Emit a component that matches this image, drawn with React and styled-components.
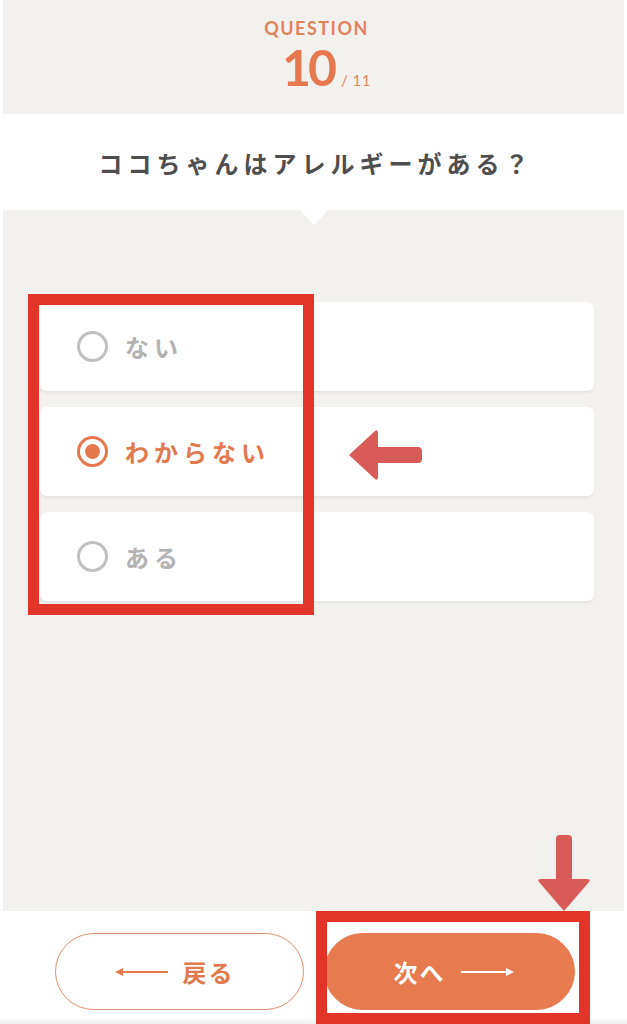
import React, { useState } from 'react';
import styled, { createGlobalStyle } from 'styled-components';

const GlobalStyle = createGlobalStyle`
  html, body {
    margin: 0;
    padding: 0;
    background: #ffffff;
  }
  * {
    box-sizing: border-box;
  }
`;

const ORANGE = '#e6784f';
const ANNOTATE = '#e3342a';
const ARROW = '#d95b57';
const GRAY_BG = '#f3f1ee';

const options = ['ない', 'わからない', 'ある'];

const App = () => {
  const [selected, setSelected] = useState(1);

  return (
    <Page>
      <GlobalStyle />
      <Sheet>
        <Header>
          <Label>QUESTION</Label>
          <Counter>
            <Current>10</Current>
            <Total>/ 11</Total>
          </Counter>
        </Header>

        <QuestionBand>
          <QuestionText>ココちゃんはアレルギーがある？</QuestionText>
        </QuestionBand>

        <Answers>
          {options.map((label, i) => (
            <Card key={label} onClick={() => setSelected(i)}>
              <Radio $checked={selected === i} />
              <OptionText $checked={selected === i}>{label}</OptionText>
            </Card>
          ))}
        </Answers>
      </Sheet>

      <Footer>
        <Button $variant="back">
          <LongArrow $dir="left" />
          戻る
        </Button>
        <Button $variant="next">
          次へ
          <LongArrow $dir="right" />
        </Button>
      </Footer>

      {/* annotations drawn over the screen */}
      <Highlight $left={28} $top={294} $width={286} $height={321} />
      <Highlight $left={316} $top={911} $width={274} $height={113} />
      <PointerLeft viewBox="0 0 78 54">
        <path
          d="M4 27 L30 3 Q33 1 33 5 L33 19 L73 19 Q77 19 77 23 L77 31 Q77 35 73 35 L33 35 L33 49 Q33 53 30 51 Z"
          fill={ARROW}
        />
      </PointerLeft>
      <PointerDown viewBox="0 0 54 78">
        <path
          d="M27 76 L2 47 Q0 44 4 44 L19 44 L19 4 Q19 0 23 0 L31 0 Q35 0 35 4 L35 44 L50 44 Q54 44 52 47 Z"
          fill={ARROW}
        />
      </PointerDown>
    </Page>
  );
};

const LongArrow = ({ $dir }) => (
  <ArrowSvg viewBox="0 0 54 10" $dir={$dir}>
    <line x1="4" y1="5" x2="53" y2="5" stroke="currentColor" strokeWidth="1.8" />
    <path d="M0 5 L8 1 L8 9 Z" fill="currentColor" />
  </ArrowSvg>
);

const Page = styled.div`
  position: relative;
  width: 627px;
  height: 1024px;
  overflow: hidden;
  background: #ffffff;
  font-family: 'Noto Sans CJK JP', 'Noto Sans', sans-serif;
`;

const Sheet = styled.div`
  margin: 0 3px;
  display: flex;
  flex-direction: column;
`;

const Header = styled.header`
  height: 114px;
  background: ${GRAY_BG};
  display: flex;
  flex-direction: column;
  align-items: center;
  padding-top: 16px;
`;

const Label = styled.div`
  font-family: Lato, 'Open Sans', sans-serif;
  font-weight: 700;
  font-size: 18px;
  letter-spacing: 1.5px;
  line-height: 24px;
  color: #e2825c;
  padding-left: 6px;
`;

const Counter = styled.div`
  display: flex;
  align-items: baseline;
  gap: 7px;
  margin-top: 1px;
  padding-left: 26px;
`;

const Current = styled.span`
  font-family: Lato, 'Open Sans', sans-serif;
  font-weight: 700;
  font-size: 50px;
  line-height: 52px;
  letter-spacing: -3px;
  color: ${ORANGE};
`;

const Total = styled.span`
  font-family: Lato, 'Open Sans', sans-serif;
  font-weight: 400;
  font-size: 15px;
  letter-spacing: 0.5px;
  color: #e2875f;
`;

const QuestionBand = styled.section`
  height: 96px;
  background: #ffffff;
  display: flex;
  align-items: center;
  justify-content: center;
`;

const QuestionText = styled.h1`
  margin: 0;
  font-size: 24px;
  font-weight: 700;
  letter-spacing: 5px;
  color: #4e4e4e;
  padding-left: 5px;
`;

const Answers = styled.section`
  position: relative;
  height: 701px;
  background: ${GRAY_BG};
  padding: 92px 30px 0 37px;
  display: flex;
  flex-direction: column;
  gap: 16px;

  &::before {
    content: '';
    position: absolute;
    top: 0;
    left: 50%;
    transform: translateX(-50%);
    border-left: 14px solid transparent;
    border-right: 14px solid transparent;
    border-top: 15px solid #ffffff;
  }
`;

const Card = styled.div`
  height: 89px;
  background: #ffffff;
  border-radius: 7px;
  box-shadow: 0 2px 3px rgba(0, 0, 0, 0.06);
  display: flex;
  align-items: center;
  padding-left: 37px;
  gap: 17px;
  cursor: pointer;
`;

const Radio = styled.span`
  position: relative;
  width: 31px;
  height: 31px;
  border-radius: 50%;
  border: 3px solid ${({ $checked }) => ($checked ? ORANGE : '#c0c0c0')};
  flex-shrink: 0;

  &::after {
    content: '';
    display: ${({ $checked }) => ($checked ? 'block' : 'none')};
    position: absolute;
    inset: 5px;
    border-radius: 50%;
    background: ${ORANGE};
  }
`;

const OptionText = styled.span`
  font-size: 24px;
  font-weight: 700;
  letter-spacing: 5px;
  color: ${({ $checked }) => ($checked ? '#e07a4f' : '#b3b3b3')};
`;

const Footer = styled.footer`
  position: relative;
  height: 113px;
  display: flex;
  justify-content: center;
  gap: 20px;
  padding: 22px 0 0 3px;

  &::after {
    content: '';
    position: absolute;
    left: 0;
    right: 0;
    bottom: 0;
    height: 6px;
    background: linear-gradient(to bottom, rgba(0, 0, 0, 0), rgba(0, 0, 0, 0.06));
  }
`;

const Button = styled.button`
  width: ${({ $variant }) => ($variant === 'next' ? '251px' : '249px')};
  height: 77px;
  border-radius: 39px;
  border: 1.5px solid ${({ $variant }) => ($variant === 'next' ? '#e87a50' : '#e3906c')};
  background: ${({ $variant }) => ($variant === 'next' ? '#e87a50' : '#ffffff')};
  color: ${({ $variant }) => ($variant === 'next' ? '#ffffff' : '#e07a4f')};
  font-family: 'Noto Sans CJK JP', sans-serif;
  font-size: 24px;
  font-weight: 700;
  letter-spacing: 2px;
  display: flex;
  align-items: center;
  justify-content: center;
  gap: 14px;
  padding: ${({ $variant }) => ($variant === 'next' ? '0 0 0 8px' : '0 10px 0 0')};
  cursor: pointer;
`;

const ArrowSvg = styled.svg`
  width: 54px;
  height: 10px;
  transform: ${({ $dir }) => ($dir === 'right' ? 'scaleX(-1)' : 'none')};
`;

const Highlight = styled.div`
  position: absolute;
  left: ${({ $left }) => $left}px;
  top: ${({ $top }) => $top}px;
  width: ${({ $width }) => $width}px;
  height: ${({ $height }) => $height}px;
  border: 11px solid ${ANNOTATE};
  pointer-events: none;
`;

const PointerLeft = styled.svg`
  position: absolute;
  left: 345px;
  top: 428px;
  width: 78px;
  height: 54px;
`;

const PointerDown = styled.svg`
  position: absolute;
  left: 537px;
  top: 835px;
  width: 54px;
  height: 78px;
`;

export default App;
